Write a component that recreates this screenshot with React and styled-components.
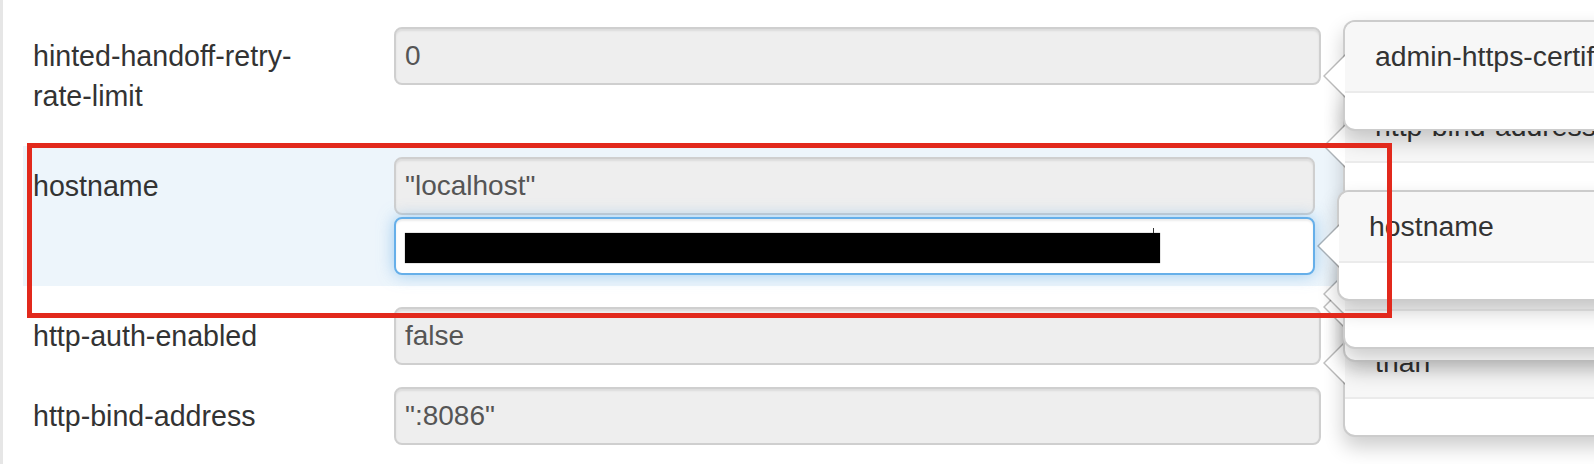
import styled, { createGlobalStyle } from "styled-components";

const GlobalStyle = createGlobalStyle`
  html, body {
    margin: 0;
    padding: 0;
    background: #fff;
  }
  body {
    font-family: "Liberation Sans", Arial, Helvetica, sans-serif;
    color: #333;
  }
`;

const settings = [
  { name: "hinted-handoff-retry-rate-limit", values: ["0"], gapAfter: 19 },
  { name: "hostname", values: ['"localhost"', null], active: true, gapAfter: 10 },
  { name: "http-auth-enabled", values: ["false"], gapAfter: 0 },
  { name: "http-bind-address", values: ['":8086"'], gapAfter: 0 },
];

const popovers = [
  { id: "p4", title: ["\u00a0", "than"], top: 289, left: 1343, z: 1 },
  { id: "py", title: ["\u00a0"], top: 251, left: 1343, z: 2 },
  { id: "px", title: ["\u00a0"], top: 238, left: 1343, z: 3 },
  { id: "p2", title: ["http-bind-address"], top: 90, left: 1343, z: 4 },
  { id: "p1", title: ["admin-https-certificate"], top: 20, left: 1343, z: 5 },
  { id: "p3", title: ["hostname"], top: 190, left: 1337, z: 6 },
];

const Page = styled.div`
  position: relative;
  width: 1594px;
  height: 464px;
  overflow: hidden;
`;

const Sheet = styled.div`
  box-sizing: border-box;
  height: 100%;
  border-left: 3px solid #e6e6e6;
  padding: 16px 0 0 20px;
`;

const Form = styled.div`
  width: 1320px;
  display: flex;
  flex-direction: column;
`;

const Row = styled.div`
  display: flex;
  align-items: flex-start;
  padding: 11px ${(p) => (p.$active ? 28 : 22)}px 11px 10px;
  margin-bottom: ${(p) => p.$gapAfter}px;
  background: ${(p) => (p.$active ? "#edf5fb" : "transparent")};
`;

const Label = styled.div`
  box-sizing: border-box;
  flex: 0 0 361px;
  padding: 9px 55px 0 0;
  font-size: 28.6px;
  line-height: 40px;
  color: #333;
`;

const Fields = styled.div`
  flex: 1;
  display: flex;
  flex-direction: column;
  gap: 2px;
`;

const Field = styled.div`
  box-sizing: border-box;
  height: 58px;
  display: flex;
  align-items: center;
  padding: 0 9px;
  border: 2px solid ${(p) => (p.$focus ? "#66afe9" : "#cfcfcf")};
  border-radius: 8px;
  background: ${(p) => (p.$focus ? "#fff" : "#eee")};
  box-shadow: ${(p) =>
    p.$focus
      ? "inset 0 2px 2px rgba(0,0,0,.075), 0 0 16px rgba(102,175,233,.6)"
      : "inset 0 2px 2px rgba(0,0,0,.075)"};
  font-size: 28px;
  color: #555;
  white-space: nowrap;
`;

const Redacted = styled.span`
  position: relative;
  display: block;
  width: 755px;
  height: 30px;
  margin-top: 3px;
  background: #000;
  box-shadow: 0 0 1px rgba(0, 0, 0, 0.6);

  &::after {
    content: "";
    position: absolute;
    top: -5px;
    right: 6px;
    width: 1px;
    height: 5px;
    background: #333;
  }
`;

const Popover = styled.div`
  position: absolute;
  top: ${(p) => p.$top}px;
  left: ${(p) => p.$left}px;
  z-index: ${(p) => p.$z};
  width: 560px;
  background: #fff;
  border: 2px solid rgba(0, 0, 0, 0.2);
  border-radius: 12px;
  box-shadow: 0 10px 20px rgba(0, 0, 0, 0.2);

  &::before,
  &::after {
    content: "";
    position: absolute;
    top: 50%;
    border-style: solid;
    border-color: transparent;
  }
  &::before {
    left: -22px;
    margin-top: -22px;
    border-width: 22px 22px 22px 0;
    border-right-color: rgba(0, 0, 0, 0.25);
  }
  &::after {
    left: -20px;
    margin-top: -20px;
    border-width: 20px 20px 20px 0;
    border-right-color: #fff;
  }
`;

const PopoverTitle = styled.h3`
  margin: 0;
  padding: 16px 28px 16px 30px;
  font-size: 28.4px;
  font-weight: normal;
  line-height: 37px;
  color: #333;
  white-space: nowrap;
  background: #f7f7f7;
  border-bottom: 2px solid #ebebeb;
  border-radius: 10px 10px 0 0;
`;

const PopoverBody = styled.div`
  padding: 18px 28px;
`;

const Annotation = styled.div`
  position: absolute;
  left: 27px;
  top: 143px;
  width: 1365px;
  height: 175px;
  box-sizing: border-box;
  border: 5px solid #e2291c;
  z-index: 10;
  pointer-events: none;
`;

const App = () => {
  return (
    <Page>
      <GlobalStyle />
      <Sheet>
        <Form>
          {settings.map((s) => (
            <Row key={s.name} $active={s.active} $gapAfter={s.gapAfter}>
              <Label>{s.name}</Label>
              <Fields>
                {s.values.map((v, i) =>
                  v === null ? (
                    <Field key={i} $focus>
                      <Redacted />
                    </Field>
                  ) : (
                    <Field key={i}>{v}</Field>
                  )
                )}
              </Fields>
            </Row>
          ))}
        </Form>
      </Sheet>

      {popovers.map((p) => (
        <Popover key={p.id} $top={p.top} $left={p.left} $z={p.z}>
          <PopoverTitle>
            {p.title.map((line, i) => (
              <div key={i}>{line}</div>
            ))}
          </PopoverTitle>
          <PopoverBody />
        </Popover>
      ))}

      <Annotation />
    </Page>
  );
};

export default App;
